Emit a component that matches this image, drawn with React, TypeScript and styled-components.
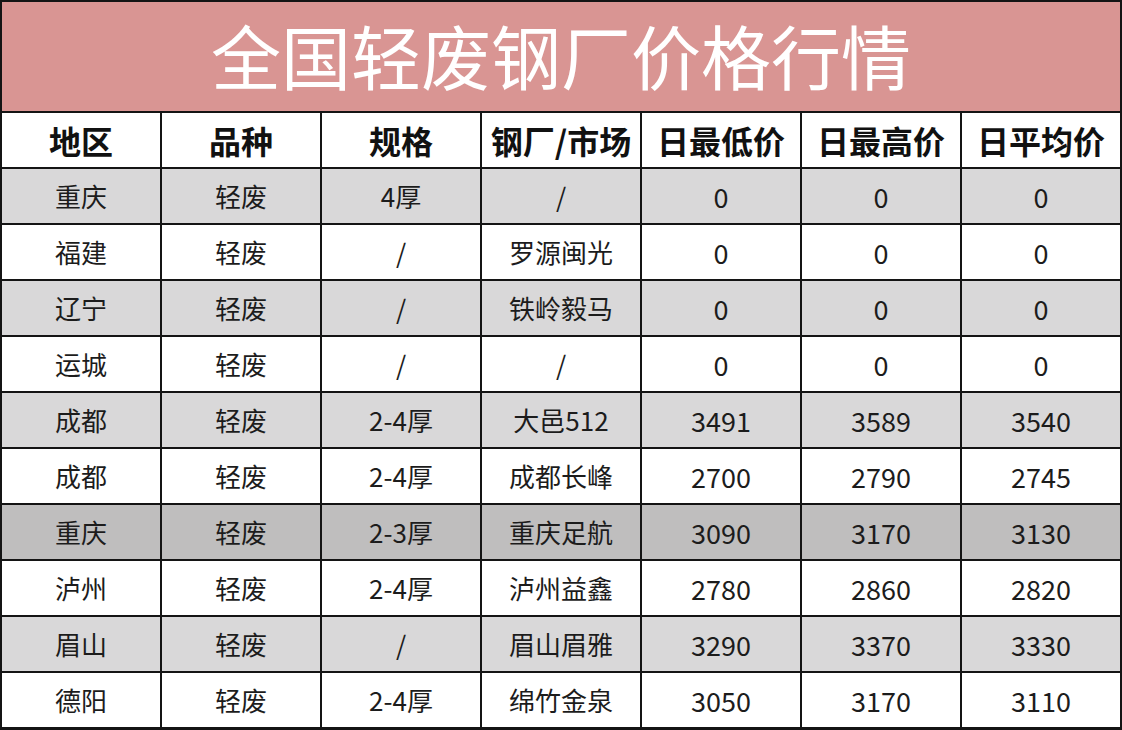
import * as React from 'react';
import styled, { createGlobalStyle } from 'styled-components';

type Row = {
  region: string;
  kind: string;
  spec: string;
  mill: string;
  low: string;
  high: string;
  avg: string;
  tone: 'light' | 'white' | 'dark';
};

const headers = ['地区', '品种', '规格', '钢厂/市场', '日最低价', '日最高价', '日平均价'];

const rows: Row[] = [
  { region: '重庆', kind: '轻废', spec: '4厚', mill: '/', low: '0', high: '0', avg: '0', tone: 'light' },
  { region: '福建', kind: '轻废', spec: '/', mill: '罗源闽光', low: '0', high: '0', avg: '0', tone: 'white' },
  { region: '辽宁', kind: '轻废', spec: '/', mill: '铁岭毅马', low: '0', high: '0', avg: '0', tone: 'light' },
  { region: '运城', kind: '轻废', spec: '/', mill: '/', low: '0', high: '0', avg: '0', tone: 'white' },
  { region: '成都', kind: '轻废', spec: '2-4厚', mill: '大邑512', low: '3491', high: '3589', avg: '3540', tone: 'light' },
  { region: '成都', kind: '轻废', spec: '2-4厚', mill: '成都长峰', low: '2700', high: '2790', avg: '2745', tone: 'white' },
  { region: '重庆', kind: '轻废', spec: '2-3厚', mill: '重庆足航', low: '3090', high: '3170', avg: '3130', tone: 'dark' },
  { region: '泸州', kind: '轻废', spec: '2-4厚', mill: '泸州益鑫', low: '2780', high: '2860', avg: '2820', tone: 'white' },
  { region: '眉山', kind: '轻废', spec: '/', mill: '眉山眉雅', low: '3290', high: '3370', avg: '3330', tone: 'light' },
  { region: '德阳', kind: '轻废', spec: '2-4厚', mill: '绵竹金泉', low: '3050', high: '3170', avg: '3110', tone: 'white' },
];

const toneColors = {
  light: '#d9d8d9',
  white: '#ffffff',
  dark: '#bfbebe',
};

// number columns read a touch larger than the CJK ones in the source
const numericCols = new Set([4, 5, 6]);

const App = () => {
  return (
    <>
      <GlobalStyle />
      <Sheet>
        <TitleBand>全国轻废钢厂价格行情</TitleBand>
        {headers.map((h) => (
          <HeadCell key={h}>{h}</HeadCell>
        ))}
        {rows.map((r, i) =>
          [r.region, r.kind, r.spec, r.mill, r.low, r.high, r.avg].map((v, j) => (
            <DataCell key={`${i}-${j}`} $tone={r.tone} $numeric={numericCols.has(j)}>
              {v}
            </DataCell>
          ))
        )}
      </Sheet>
    </>
  );
};

export default App;

const GlobalStyle = createGlobalStyle`
  html, body {
    margin: 0;
    padding: 0;
    background: #ffffff;
  }
  body {
    font-family: "Noto Sans CJK SC", "Noto Sans", sans-serif;
  }
`;

const Sheet = styled.div`
  width: 1122px;
  height: 730px;
  box-sizing: border-box;
  display: grid;
  grid-template-columns: repeat(7, 1fr);
  grid-template-rows: 109px 54px repeat(10, 54px);
  gap: 2px;
  padding: 2px 2px 3px 2px;
  background: #141414;
`;

const TitleBand = styled.div`
  grid-column: 1 / -1;
  display: flex;
  align-items: center;
  justify-content: center;
  background: #d99593;
  color: #ffffff;
  font-size: 70px;
  font-weight: 400;
  line-height: 1;
  padding-bottom: 4px;
  box-sizing: border-box;
`;

const HeadCell = styled.div`
  display: flex;
  align-items: center;
  justify-content: center;
  background: #ffffff;
  color: #111111;
  font-size: 32px;
  font-weight: 700;
  line-height: 1;
  white-space: nowrap;
`;

const DataCell = styled.div<{ $tone: Row['tone']; $numeric: boolean }>`
  display: flex;
  align-items: center;
  justify-content: center;
  background: ${(p) => toneColors[p.$tone]};
  color: #1c1c1c;
  font-size: ${(p) => (p.$numeric ? '27px' : '26px')};
  line-height: 1;
  white-space: nowrap;
`;
